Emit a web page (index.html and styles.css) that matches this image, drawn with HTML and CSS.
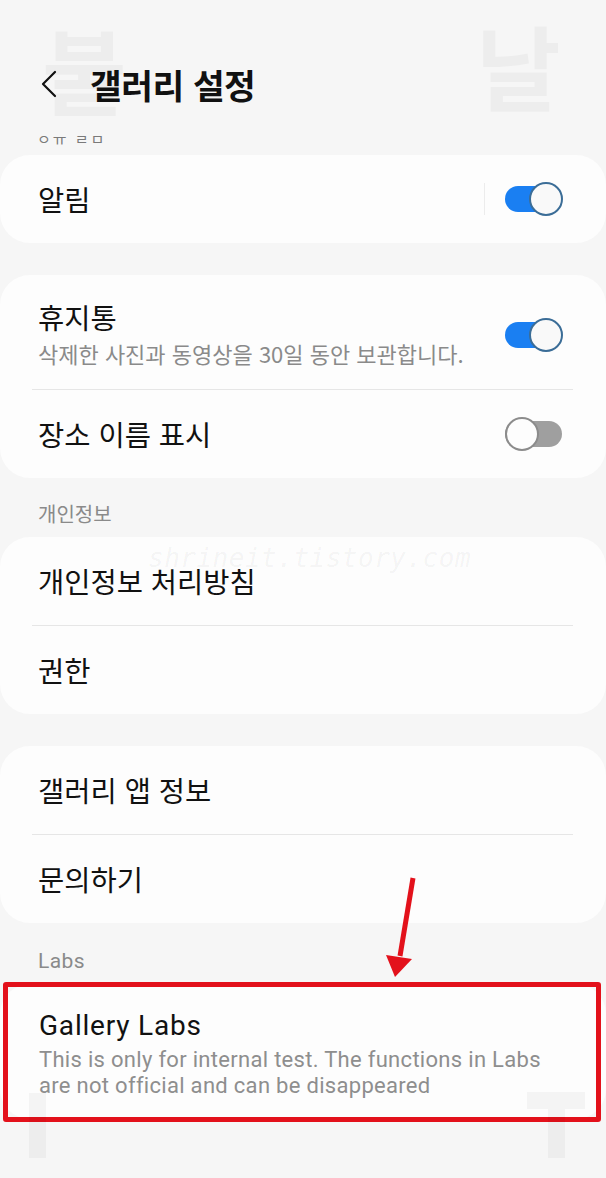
FILE: index.html
```html
<!DOCTYPE html>
<html lang="ko">
<head>
  <meta charset="UTF-8">
  <meta name="viewport" content="width=device-width, initial-scale=1.0">
  <title>갤러리 설정</title>
  <link rel="stylesheet" href="styles.css">
</head>
<body>
  <div class="screen">
    <!-- 상단 제목 -->
    <header class="topbar">
      <svg class="back" width="18" height="28" viewBox="0 0 18 28">
        <path d="M15 2 L3 14 L15 26" fill="none" stroke="#111" stroke-width="2.2" stroke-linecap="round" stroke-linejoin="round"/>
      </svg>
      <h1>갤러리 설정</h1>
    </header>

    <div class="stub">ㅇㅠ ㄹㅁ</div>

    <section class="card">
      <div class="row">
        <span class="label">알림</span>
        <span class="vsep"></span>
        <span class="switch on"></span>
      </div>
    </section>

    <section class="card">
      <div class="row tall">
        <div class="text">
          <div class="label">휴지통</div>
          <div class="sub">삭제한 사진과 동영상을 30일 동안 보관합니다.</div>
        </div>
        <span class="switch on"></span>
      </div>
      <div class="divider"></div>
      <div class="row">
        <span class="label">장소 이름 표시</span>
        <span class="switch off"></span>
      </div>
    </section>

    <div class="group-title">개인정보</div>
    <section class="card">
      <div class="row"><span class="label">개인정보 처리방침</span></div>
      <div class="divider"></div>
      <div class="row"><span class="label">권한</span></div>
    </section>

    <section class="card">
      <div class="row"><span class="label">갤러리 앱 정보</span></div>
      <div class="divider"></div>
      <div class="row"><span class="label">문의하기</span></div>
    </section>

    <div class="group-title en">Labs</div>
    <section class="card labs">
      <div class="labs-title">Gallery Labs</div>
      <div class="labs-sub">This is only for internal test. The functions in Labs are not official and can be disappeared</div>
      <div class="highlight"></div>
    </section>

    <!-- 캡처 위 표시 -->
    <svg class="arrow" width="40" height="112" viewBox="0 0 40 112">
      <line x1="33" y1="8" x2="20" y2="86" stroke="#e3111b" stroke-width="5"/>
      <polygon points="6,85 32,89 15,107" fill="#e3111b"/>
    </svg>
    <div class="mark">shrineit.tistory.com</div>
    <div class="ghost g1">불</div>
    <div class="ghost g2">날</div>
    <div class="ghost-bar b1"></div>
    <div class="ghost-bar b2"></div>
    <div class="ghost-bar b3"></div>
  </div>
</body>
</html>
```

FILE: styles.css
```css
body {
  margin: 0;
  background-color: #f6f6f6;
  font-family: "Noto Sans CJK KR", "Noto Sans", sans-serif;
  color: #111;
}

.screen {
  position: relative;
  width: 606px;
  height: 1178px;
  overflow: hidden;
}

.topbar {
  display: flex;
  align-items: center;
  height: 60px;
  padding: 54px 0 16px 40px;
}

.topbar .back {
  display: block;
}

.topbar h1 {
  margin: 0 0 0 32px;
  font-size: 34.5px;
  font-weight: 700;
  line-height: 48px;
  letter-spacing: -0.5px;
}

.stub {
  height: 25px;
  padding-left: 37px;
  font-size: 15px;
  line-height: 18px;
  letter-spacing: 2px;
  color: #7a7a7a;
}

.card {
  background-color: #fdfdfd;
  border-radius: 30px;
  margin-bottom: 32px;
}

.row {
  display: flex;
  align-items: center;
  min-height: 88px;
  padding: 0 43px 0 38px;
}

.row.tall {
  min-height: 0;
  padding-top: 24px;
  padding-bottom: 18px;
}

.text {
  flex: 1;
}

.label {
  font-size: 28.5px;
  line-height: 36px;
  flex: 1;
}

.sub {
  font-size: 22px;
  line-height: 36px;
  color: #8a8a8a;
}

.vsep {
  width: 1px;
  height: 32px;
  background-color: #ececec;
  margin-right: 20px;
}

.divider {
  height: 1px;
  margin: 0 33px 0 32px;
  background-color: #e6e6e6;
}

.switch {
  position: relative;
  width: 58px;
  height: 34px;
  flex: none;
}

.switch::before {
  content: "";
  position: absolute;
  left: 0;
  right: 1px;
  top: 4px;
  height: 26px;
  border-radius: 13px;
}

.switch::after {
  content: "";
  position: absolute;
  top: 0;
  width: 30px;
  height: 30px;
  border-radius: 50%;
  box-sizing: content-box;
}

.switch.on::before {
  background-color: #1a7ff2;
}

.switch.on::after {
  right: 0;
  background-color: #f9f9f9;
  border: 2px solid #3b6d97;
}

.switch.off::before {
  background-color: #9f9f9f;
}

.switch.off::after {
  left: 0;
  background-color: #fdfdfd;
  border: 2px solid #8c8c8c;
}

.group-title {
  padding: 22px 0 9px 38px;
  margin-top: -32px;
  font-size: 20px;
  line-height: 28px;
  color: #8a8a8a;
}

.group-title.en {
  padding-top: 24px;
  font-family: Roboto, "Noto Sans", sans-serif;
  font-size: 21px;
  letter-spacing: 0.4px;
}

.labs {
  position: relative;
  padding: 24px 60px 20px 39px;
  margin-bottom: 0;
  font-family: Roboto, "Noto Sans", sans-serif;
}

.labs-title {
  font-size: 28px;
  line-height: 36px;
  letter-spacing: 0.8px;
  color: #111;
}

.labs-sub {
  margin-top: 3px;
  font-size: 22px;
  line-height: 26px;
  letter-spacing: 0.3px;
  color: #8e8e8e;
}

.highlight {
  position: absolute;
  top: -2px;
  left: 3px;
  right: 5px;
  bottom: -3px;
  border: 5px solid #e3111b;
  border-radius: 3px;
}

.arrow {
  position: absolute;
  left: 380px;
  top: 870px;
}

.mark {
  position: absolute;
  left: 148px;
  top: 543px;
  font-family: "DejaVu Sans Mono", monospace;
  font-style: italic;
  font-size: 26px;
  letter-spacing: 0.5px;
  color: rgba(0, 0, 0, 0.05);
}

.ghost {
  position: absolute;
  font-size: 92px;
  font-weight: 700;
  line-height: 1;
  color: rgba(0, 0, 0, 0.035);
}

.g1 {
  left: 42px;
  top: 22px;
}

.g2 {
  left: 476px;
  top: 18px;
}

.ghost-bar {
  position: absolute;
  background-color: rgba(0, 0, 0, 0.035);
}

.b1 {
  left: 29px;
  top: 1093px;
  width: 17px;
  height: 65px;
}

.b2 {
  left: 527px;
  top: 1092px;
  width: 58px;
  height: 17px;
}

.b3 {
  left: 548px;
  top: 1109px;
  width: 17px;
  height: 49px;
}
```
